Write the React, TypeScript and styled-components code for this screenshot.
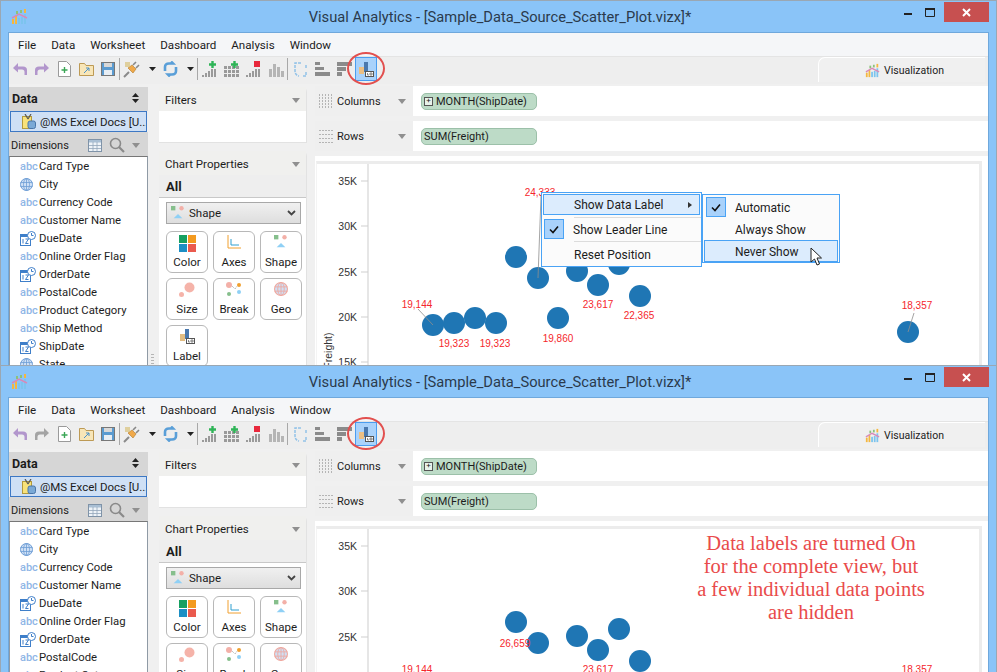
import React from "react";
import styled, { createGlobalStyle } from "styled-components";

const Global = createGlobalStyle`
  html, body { margin: 0; padding: 0; width: 997px; height: 672px; overflow: hidden; background: #8ac4f8; }
  * { box-sizing: border-box; }
  body { font-family: Roboto, "Open Sans", "Liberation Sans", sans-serif; font-size: 12px; color: #1c1c1c; }
  svg { flex: none; }
`;

const Frame = styled.section<{ $h: number }>`
  height: ${(p) => p.$h}px;
  width: 997px;
  background: #8ac4f8;
  border: 1px solid #9aa7b3;
  border-bottom: 0;
  display: flex;
  flex-direction: column;
  overflow: hidden;
`;
const TitleBar = styled.header`
  height: 31px;
  flex: none;
  display: grid;
  grid-template-columns: 1fr auto 1fr;
  align-items: center;
  padding: 0 7px 0 10px;
`;
const TitleText = styled.h1`
  margin: 0;
  font-size: 14.7px;
  font-weight: 400;
  color: #2a3a4c;
  white-space: nowrap;
`;
const Controls = styled.div`
  justify-self: end;
  align-self: start;
  display: flex;
  align-items: flex-start;
  height: 21px;
  margin-top: 1px;
`;
const Ctl = styled.div`
  width: 22px;
  height: 20px;
  display: flex;
  align-items: center;
  justify-content: center;
`;
const Close = styled.div`
  width: 45px;
  height: 20px;
  margin-left: 3px;
  background: #c75050;
  display: flex;
  align-items: center;
  justify-content: center;
`;
const Client = styled.div`
  margin: 0 7px;
  flex: 1;
  min-height: 0;
  border: 1px solid #6fa8dc;
  border-bottom: 0;
  background: #f0f0f0;
  display: flex;
  flex-direction: column;
  overflow: hidden;
`;
const MenuBar = styled.nav`
  height: 23px;
  flex: none;
  background: #f5f6f8;
  display: flex;
  align-items: center;
  gap: 15px;
  padding: 1px 0 0 9px;
  font-size: 11.6px;
`;
const ToolBar = styled.div`
  height: 28px;
  flex: none;
  display: flex;
  align-items: flex-start;
  background: #eeeeee;
  border-top: 1px solid #e4e4e4;
`;
const Slot = styled.div<{ $active?: boolean }>`
  position: relative;
  width: 22px;
  height: 24px;
  display: flex;
  align-items: center;
  justify-content: center;
  background: ${(p) => (p.$active ? "#a9d2fb" : "transparent")};
  outline: ${(p) => (p.$active ? "1px solid #4a9df0" : "none")};
  outline-offset: -1px;
`;
const Sep = styled.div`
  width: 1px;
  height: 22px;
  margin: 1px 1px 0 0;
  background: #a8a8a8;
`;
const Caret = styled.div`
  width: 10px;
  height: 24px;
  margin: 0 2px 0 4px;
  display: flex;
  align-items: center;
  justify-content: center;
`;
const RedRing = styled.div`
  position: absolute;
  left: -8px;
  top: -5px;
  width: 38px;
  height: 33px;
  border: 2px solid #e2504f;
  border-radius: 50%;
`;
const VizTab = styled.div`
  margin-left: auto;
  margin-right: 3px;
  width: 167px;
  height: 25px;
  background: #f0f0f0;
  border-top: 1px solid #fff;
  border-left: 1px solid #fff;
  border-top-left-radius: 7px;
  display: flex;
  align-items: center;
  padding: 1px 0 0 46px;
  gap: 4px;
  font-size: 10.5px;
`;
const Workspace = styled.div`
  flex: 1;
  min-height: 0;
  display: flex;
  padding-top: 2px;
  background: #f0f0f0;
`;
const DataPanel = styled.aside`
  width: 139px;
  flex: none;
  margin-top: 1px;
  display: flex;
  flex-direction: column;
`;
const DataHead = styled.div`
  height: 24px;
  flex: none;
  background: #d6d6d6;
  display: flex;
  align-items: center;
  justify-content: space-between;
  padding: 0 9px 2px 3px;
  font-weight: 700;
  font-size: 12.5px;
`;
const Source = styled.div`
  height: 21px;
  flex: none;
  margin: 0 1px;
  background: #cfe0f5;
  border: 1px solid #3d78c4;
  display: flex;
  align-items: center;
  gap: 4px;
  padding-left: 11px;
  white-space: nowrap;
  overflow: hidden;
  font-size: 11.5px;
`;
const DimHead = styled.div`
  height: 24px;
  flex: none;
  background: #d6d6d6;
  display: flex;
  align-items: center;
  padding: 2px 8px 0 2px;
  font-size: 11px;
`;
const DimIcons = styled.div`
  margin-left: auto;
  display: flex;
  align-items: center;
  gap: 7px;
`;
const FieldList = styled.ul`
  list-style: none;
  margin: 0;
  padding: 0;
  flex: 1;
  background: #fff;
  border: 1px solid #8f9aa5;
  border-bottom: 0;
  border-top-color: #777;
`;
const Field = styled.li`
  height: 18px;
  display: flex;
  align-items: center;
  font-size: 11.3px;
  white-space: nowrap;
`;
const FieldIcon = styled.span`
  width: 19px;
  margin-left: 10px;
  display: flex;
  justify-content: flex-start;
  flex: none;
  color: #8fb6e6;
  font-size: 11px;
  font-weight: 500;
`;
const FieldName = styled.span`
  margin-left: 0;
`;
const Gutter = styled.div<{ $w: number }>`
  width: ${(p) => p.$w}px;
  flex: none;
`;
const PropsColumn = styled.div`
  width: 148px;
  flex: none;
  display: flex;
  flex-direction: column;
  gap: 8px;
  padding-top: 1px;
`;
const Card = styled.div<{ $h?: number }>`
  background: #fff;
  border-top-left-radius: 5px;
  border-top-right-radius: 5px;
  border-right: 1px solid #e2e2e2;
  border-bottom: 1px solid #e2e2e2;
  flex: ${(p) => (p.$h ? "none" : "1")};
  height: ${(p) => (p.$h ? `${p.$h}px` : "auto")};
`;
const CardHead = styled.div`
  height: 24px;
  background: #f0f0ee;
  display: flex;
  align-items: center;
  justify-content: space-between;
  padding: 2px 6px 0;
  font-size: 11.5px;
`;
const AllRow = styled.div`
  height: 23px;
  background: #eeeeee;
  border-bottom: 1px solid #c8c8c8;
  display: flex;
  align-items: center;
  padding-left: 7px;
  font-weight: 700;
  font-size: 13px;
`;
const SelectBox = styled.div`
  margin: 4px 5px 0 7px;
  height: 22px;
  background: linear-gradient(#f0f0f0, #dedede);
  border: 1px solid #a8a8a8;
  display: flex;
  align-items: center;
  padding: 0 4px;
  gap: 4px;
  font-size: 11.5px;
`;
const SelectChevron = styled.span`
  margin-left: auto;
  display: flex;
`;
const PropGrid = styled.div`
  display: grid;
  grid-template-columns: repeat(3, 42px);
  gap: 5px;
  padding: 7px 0 0 7px;
`;
const PropButton = styled.div`
  height: 42px;
  background: #fff;
  border: 1px solid #b8b8b8;
  border-radius: 6px;
  display: flex;
  flex-direction: column;
  align-items: center;
  justify-content: space-between;
  padding: 3px 0 3px;
  font-size: 11.5px;
`;
const Main = styled.div`
  flex: 1;
  min-width: 0;
  display: flex;
  flex-direction: column;
  gap: 5px;
`;
const Shelf = styled.div`
  height: 30px;
  flex: none;
  display: flex;
  background: #fff;
  border-top-left-radius: 5px;
`;
const ShelfLabel = styled.div`
  width: 98px;
  flex: none;
  background: #efefef;
  display: flex;
  align-items: center;
  padding: 0 7px 0 4px;
  gap: 4px;
  font-size: 11px;
`;
const ShelfCaret = styled.span`
  margin-left: auto;
  display: flex;
`;
const ShelfBody = styled.div`
  flex: 1;
  display: flex;
  align-items: center;
  padding: 0 0 0 8px;
`;
const Chip = styled.div`
  width: 116px;
  height: 17px;
  background: #bddbc7;
  border: 1px solid #9cc0a9;
  border-radius: 5px;
  display: flex;
  align-items: center;
  padding-left: 2px;
  gap: 3px;
  font-size: 11px;
`;
const PlusBox = styled.span`
  width: 9px;
  height: 9px;
  border: 1px solid #555;
  background: #e8f2ea;
  display: flex;
  align-items: center;
  justify-content: center;
  font-size: 8px;
  line-height: 1;
`;
const ChartOuter = styled.div`
  flex: 1;
  background: #fff;
  padding: 5px 6px 0 1px;
`;
const ChartFrame = styled.div`
  position: relative;
  height: 400px;
  border-top: 3px solid #ececec;
  border-right: 3px solid #ececec;
  border-left: 1px solid #f4f4f4;
`;
const Menu = styled.div`
  position: absolute;
  left: 224px;
  top: 28px;
  width: 161px;
  height: 75px;
  background: #fbfbfb;
  border: 1px solid #4aa3f5;
  padding-top: 1px;
  font-size: 12px;
`;
const MenuRow = styled.div<{ $h: number; $hot?: boolean }>`
  height: ${(p) => p.$h}px;
  margin: 0 1px;
  display: flex;
  align-items: center;
  background: ${(p) => (p.$hot ? "#dcecfd" : "transparent")};
  border: 1px solid ${(p) => (p.$hot ? "#4aa3f5" : "transparent")};
`;
const Check = styled.span`
  width: 20px;
  height: 20px;
  background: #a9d2fb;
  border: 1px solid #4aa3f5;
  display: flex;
  align-items: center;
  justify-content: center;
  flex: none;
`;
const MenuText = styled.span<{ $pad: number; $dy?: number }>`
  margin-left: ${(p) => p.$pad}px;
  margin-top: ${(p) => p.$dy || 0}px;
  white-space: nowrap;
`;
const MenuArrow = styled.span`
  margin-left: auto;
  margin-right: 7px;
  width: 0;
  height: 0;
  border-left: 4px solid #333;
  border-top: 3.5px solid transparent;
  border-bottom: 3.5px solid transparent;
`;
const MenuSep = styled.div<{ $mt: number }>`
  height: 1px;
  margin: ${(p) => p.$mt}px 0 0 32px;
  background: #dcdcdc;
`;
const SubMenu = styled.div`
  position: absolute;
  left: 385px;
  top: 30px;
  width: 138px;
  height: 69px;
  background: #fbfbfb;
  border: 1px solid #4aa3f5;
  padding-top: 2px;
  font-size: 12px;
`;
const SubRow = styled.div<{ $h: number; $mt?: number; $hot?: boolean }>`
  height: ${(p) => p.$h}px;
  margin: ${(p) => p.$mt || 0}px 1px 0 1px;
  display: flex;
  align-items: center;
  padding-left: ${(p) => (p.$hot ? 0 : 1)}px;
  background: ${(p) => (p.$hot ? "#dcecfd" : "transparent")};
  border: 1px solid ${(p) => (p.$hot ? "#4aa3f5" : "transparent")};
`;
const Pointer = styled.svg`
  position: absolute;
  left: 493px;
  top: 83px;
`;
const Note = styled.div`
  position: absolute;
  left: 344px;
  top: 3px;
  width: 300px;
  text-align: center;
  font-family: "Liberation Serif", serif;
  font-size: 20.5px;
  line-height: 23px;
  color: #e94b4b;
`;
const Grip = styled.div`
  width: 3px;
  height: 12px;
  margin: 268px 0 0 3px;
  background: repeating-linear-gradient(#b5b5b5 0 1px, transparent 1px 3px);
`;
const ChartSvg = styled.svg`
  display: block;
`;

const Logo = ({ s = 17 }: { s?: number }) => (
  <svg width={s} height={s} viewBox="0 0 17 17">
    <rect x="1" y="11" width="2" height="5" fill="#f4b740" />
    <rect x="4" y="8" width="2" height="8" fill="#f4b740" />
    <rect x="7" y="10" width="2" height="6" fill="#7cc4ee" />
    <rect x="10" y="9" width="2" height="7" fill="#7cc4ee" />
    <rect x="13" y="6" width="2" height="10" fill="#7cc4ee" />
    <rect x="5" y="3" width="2" height="3" fill="#8cc27a" />
    <rect x="9" y="2" width="2" height="3" fill="#8cc27a" />
    <rect x="13" y="1" width="2" height="4" fill="#f4b740" />
    <path d="M1 10 L8 6 L16 10" stroke="#d889b8" strokeWidth="1.5" fill="none" />
  </svg>
);
const Undo = ({ c, flip }: { c: string; flip?: boolean }) => (
  <svg width="16" height="14" viewBox="0 0 16 14" style={flip ? { transform: "scaleX(-1)" } : undefined}>
    <path d="M6 1 L1 6 L6 10.5 V7.5 H10 Q12.5 7.5 12.5 10 V13 H15 V8 Q15 4.5 11 4.5 H6 Z" fill={c} />
  </svg>
);
const NewDoc = () => (
  <svg width="13" height="16" viewBox="0 0 13 16">
    <path d="M.5.5h8l4 4v11H.5z" fill="#fff" stroke="#9a9a9a" />
    <path d="M6.5 6v6M3.5 9h6" stroke="#3aa655" strokeWidth="1.4" />
  </svg>
);
const Folder = () => (
  <svg width="15" height="13" viewBox="0 0 15 13">
    <path d="M.5 12.5V.5h5l1.5 2h7.5v10z" fill="#f8e6b8" stroke="#bd9a55" />
    <path d="M5 10 L10 5 M7 5h3v3" stroke="#4b91c9" fill="none" />
  </svg>
);
const Save = () => (
  <svg width="14" height="14" viewBox="0 0 14 14">
    <rect x=".5" y=".5" width="13" height="13" fill="#5b9bd0" stroke="#777" />
    <rect x="3" y="1" width="8" height="4" fill="#d8d8d8" />
    <rect x="3" y="8" width="8" height="5" fill="#e8eef4" />
  </svg>
);
const Plug = () => (
  <svg width="18" height="18" viewBox="0 0 18 18">
    <path d="M1 17 L6 12" stroke="#8a8a8a" strokeWidth="2" />
    <path d="M5 8 L10 13 L13 9 L9 5 Z" fill="#f0a94a" stroke="#b07a2a" strokeWidth=".6" />
    <path d="M10 5 L13 2 M13 8 L16 5" stroke="#888" strokeWidth="1.6" />
    <rect x="2" y="2" width="5" height="5" fill="#d9c27a" opacity=".7" />
  </svg>
);
const Sync = ({ c = "#5a9fd8" }: { c?: string }) => (
  <svg width="15" height="16" viewBox="0 0 15 16">
    <path d="M2 10 V6 Q2 2.5 6 2.5 H10 L8 .5 M13 6 V10 Q13 13.5 9 13.5 H5 L7 15.5" fill="none" stroke={c} strokeWidth="2.6" />
  </svg>
);
const SmallCaret = () => (
  <svg width="7" height="4" viewBox="0 0 7 4"><path d="M0 0h7L3.5 4z" fill="#222" /></svg>
);
const GreyCaret = () => (
  <svg width="8" height="5" viewBox="0 0 8 5"><path d="M0 0h8L4 5z" fill="#8f8f8f" /></svg>
);
const BarsAdd = ({ mark }: { mark: "green" | "grid" | "red" | "none" }) => (
  <svg width="16" height="17" viewBox="0 0 16 17">
    {mark === "grid" ? (
      <g fill="#9a9a9a">
        {[2, 6, 10].map((y) => [0, 4, 8, 12].map((x) => <rect key={`${x}${y}`} x={x} y={y + 3} width="3" height="3" />))}
      </g>
    ) : mark === "none" ? (
      <g fill="#b5b5b5">
        <rect x="1" y="8" width="3" height="8" /><rect x="5" y="3" width="3" height="13" />
        <rect x="9" y="6" width="3" height="10" /><rect x="13" y="10" width="3" height="6" />
      </g>
    ) : (
      <g fill="#9a9a9a">
        <rect x="0" y="14" width="2" height="2" /><rect x="3" y="12" width="2" height="4" />
        <rect x="6" y="10" width="2" height="6" /><rect x="9" y="8" width="2" height="8" />
        <rect x="12" y="8" width="2" height="8" />
      </g>
    )}
    {(mark === "green" || mark === "grid") && (
      <path d="M10.5 0v7M7 3.5h7" stroke="#2fb457" strokeWidth="2.4" />
    )}
    {mark === "red" && <path d="M8 0h6v6H8z" fill="#e8283c" />}
  </svg>
);
const Loop = () => (
  <svg width="15" height="15" viewBox="0 0 15 15">
    <path d="M8 1 H2 V9 Q2 13 6 14 M10 14 H13 V10 M13 6 V3" fill="none" stroke="#92c2e8" strokeWidth="1.5" strokeDasharray="3 1" />
  </svg>
);
const SortA = () => (
  <svg width="15" height="14" viewBox="0 0 15 14">
    <rect x="0" y="0" width="5" height="3" fill="#8b8b8b" />
    <rect x="0" y="5" width="9" height="3" fill="#8b8b8b" />
    <rect x="0" y="10" width="15" height="4" fill="#8b8b8b" />
  </svg>
);
const SortB = () => (
  <svg width="15" height="14" viewBox="0 0 15 14">
    <rect x="0" y="0" width="15" height="4" fill="#8b8b8b" />
    <rect x="0" y="5" width="9" height="4" fill="#8b8b8b" />
    <rect x="0" y="10" width="5" height="4" fill="#8b8b8b" />
  </svg>
);
const LabelIcon = ({ hi }: { hi?: boolean }) => (
  <svg width="15" height="15" viewBox="0 0 15 15">
    <rect x="0" y="5" width="5" height="7" fill={hi ? "#ecbf83" : "#e2bd82"} />
    <rect x="5" y="0" width="4" height="10" fill="#4a78ad" />
    <rect x="6.5" y="9.5" width="8" height="5" fill="#fff" stroke="#555" />
    <path d="M8.5 11v2h1.5M11 11h2v2h-2z" fill="none" stroke="#555" strokeWidth=".7" />
  </svg>
);
const UpDown = () => (
  <svg width="7" height="10" viewBox="0 0 7 10"><path d="M3.5 0L7 4H0zM3.5 10L0 6h7z" fill="#222" /></svg>
);
const Db = () => (
  <svg width="14" height="15" viewBox="0 0 14 15">
    <rect x=".5" y="2.5" width="9" height="12" fill="#f8e27a" stroke="#b39a3d" />
    <path d="M3 0 L6 5 M9 0 L6 5" stroke="#555" strokeWidth="1.2" />
    <rect x="6" y="7" width="7.5" height="7.5" rx="2" fill="#7aa9d6" stroke="#4a76a8" />
  </svg>
);
const TableIco = () => (
  <svg width="14" height="13" viewBox="0 0 14 13">
    <rect x=".5" y=".5" width="13" height="12" fill="#eef3f8" stroke="#7f93a8" />
    <rect x="1" y="1" width="12" height="2.5" fill="#a9bfd4" />
    <path d="M5 3v9M9 3v9M1 6.500h12M1 9.500h12" stroke="#93a6ba" strokeWidth=".8" />
  </svg>
);
const Lens = () => (
  <svg width="16" height="16" viewBox="0 0 16 16">
    <circle cx="6.500" cy="6.500" r="5" fill="none" stroke="#8a8a8a" strokeWidth="1.6" />
    <path d="M10 10l5 5" stroke="#8a8a8a" strokeWidth="2.200" />
  </svg>
);
const Globe = ({ c = "#6f9ed6", s = 13 }: { c?: string; s?: number }) => (
  <svg width={s} height={s} viewBox="0 0 13 13">
    <circle cx="6.500" cy="6.500" r="6" fill="#cfe0f5" stroke={c} />
    <ellipse cx="6.500" cy="6.500" rx="3" ry="6" fill="none" stroke={c} strokeWidth=".8" />
    <path d="M.5 4.500h12M.5 8.500h12M6.500.5v12" stroke={c} strokeWidth=".8" />
  </svg>
);
const DateIco = () => (
  <svg width="16" height="15" viewBox="0 0 16 15">
    <rect x=".5" y="3.500" width="10" height="11" fill="#fff" stroke="#3f7fc9" />
    <rect x=".5" y="3.500" width="10" height="2.500" fill="#3f7fc9" />
    <path d="M3 8v4.500M5.500 8h3l-3 4.500h3" stroke="#3f7fc9" fill="none" />
    <circle cx="11.500" cy="4.500" r="4" fill="#fff" stroke="#3f7fc9" />
    <path d="M11.500 2v2.500h2" stroke="#3f7fc9" fill="none" />
  </svg>
);
const ShapeIco = ({ s = 16 }: { s?: number }) => (
  <svg width={s} height={s} viewBox="0 0 16 16">
    <rect x="0" y="0" width="5" height="5" fill="#86bf8c" />
    <circle cx="12" cy="2.500" r="2.500" fill="#f3b0a8" />
    <path d="M3 14 L8 9 L13 14 Z" fill="#8fd0f5" />
  </svg>
);
const ColorIco = () => (
  <svg width="17" height="17" viewBox="0 0 17 17">
    <rect width="8" height="8" fill="#16a060" /><rect x="9" width="8" height="8" fill="#f39a1f" />
    <rect y="9" width="8" height="8" fill="#1c8fc4" /><rect x="9" y="9" width="8" height="8" fill="#ea5a4e" />
  </svg>
);
const AxesIco = () => (
  <svg width="14" height="14" viewBox="0 0 14 14">
    <path d="M1 0v13h13" fill="none" stroke="#f0a030" />
    <path d="M4 4v6h8" fill="none" stroke="#2f9fd0" />
  </svg>
);
const SizeIco = () => (
  <svg width="16" height="16" viewBox="0 0 16 16">
    <circle cx="10.500" cy="5.500" r="5" fill="#f5b3a9" /><circle cx="2.500" cy="12.500" r="2.500" fill="#f5b3a9" />
  </svg>
);
const BreakIco = () => (
  <svg width="16" height="15" viewBox="0 0 16 15">
    <circle cx="3" cy="3" r="3" fill="#f3b0a8" /><circle cx="13" cy="3" r="2" fill="#f0a030" />
    <circle cx="3" cy="12" r="2" fill="#86bf8c" /><circle cx="13" cy="10" r="2" fill="#8fd0f5" />
    <path d="M6 4l3 3M9 7l2-3" stroke="#aaa" strokeDasharray="1 1" />
  </svg>
);
const Handle = () => (
  <svg width="14" height="15" viewBox="0 0 14 15">
    {[0, 3, 6, 9, 12].map((x) => (
      <path key={x} d={`M${x + 0.5} 0v15`} stroke="#b5b5b5" strokeDasharray="2 1" />
    ))}
  </svg>
);
const HandleRows = () => (
  <svg width="14" height="15" viewBox="0 0 14 15">
    {[1, 5, 9, 13].map((y) => (
      <path key={y} d={`M0 ${y + 0.5}h14`} stroke="#b5b5b5" strokeDasharray="2 1" />
    ))}
  </svg>
);
const Tick = () => (
  <svg width="10" height="9" viewBox="0 0 10 9"><path d="M1 4.500l3 3 5-6" fill="none" stroke="#111" strokeWidth="1.600" /></svg>
);

const fields: [string, string][] = [
  ["abc", "Card Type"], ["geo", "City"], ["abc", "Currency Code"], ["abc", "Customer Name"],
  ["date", "DueDate"], ["abc", "Online Order Flag"], ["date", "OrderDate"], ["abc", "PostalCode"],
  ["abc", "Product Category"], ["abc", "Ship Method"], ["date", "ShipDate"], ["geo", "State"],
];
const points = [
  [433, 325], [454, 323], [475, 318], [496, 323], [516, 257], [538, 278],
  [577, 271], [598, 285], [619, 264], [558, 318], [640, 296], [908, 332],
];
const ticks: [string, number][] = [["35K", 181], ["30K", 226], ["25K", 272], ["20K", 317], ["15K", 362]];
const labelsTop: [string, number, number][] = [
  ["24,333", 540, 196], ["19,144", 417, 308], ["19,323", 454, 347], ["19,323", 495, 347],
  ["19,860", 558, 342], ["23,617", 598, 308], ["22,365", 639, 319], ["18,357", 917, 309],
];
const labelsBottom: [string, number, number][] = [
  ["26,659", 515, 282], ["19,144", 417, 308], ["23,617", 598, 308], ["18,357", 917, 308],
];

const Chart = ({ top }: { top: boolean }) => (
  <ChartSvg width="655" height="397" viewBox="317 164 655 397">
    <path d="M368 164V400" stroke="#e6e6e6" strokeWidth="2" />
    {ticks.map(([t, y]) => (
      <g key={t}>
        <path d={`M361 ${y}h7`} stroke="#cfcfcf" />
        <text x="357" y={y + 4} textAnchor="end" fontFamily="Liberation Sans" fontSize="10.500" fill="#333">{t}</text>
      </g>
    ))}
    <text transform="rotate(-90 332 364)" x="332" y="364" textAnchor="middle" fontFamily="Liberation Sans" fontSize="10.500" fill="#333">SUM(Freight)</text>
    {points.map(([x, y]) => <circle key={`${x}`} cx={x} cy={y} r="11" fill="#1f76b4" />)}
    {top && (
      <g stroke="#8f8f8f" strokeWidth="1" opacity=".8">
        <path d="M538 278L541 196" />
        <path d="M418 309L433 325" />
        <path d="M908 332L914 313" />
      </g>
    )}
    {(top ? labelsTop : labelsBottom).map(([t, x, y]) => (
      <text key={`${t}${x}`} x={x} y={y} textAnchor="middle" fontFamily="Liberation Sans" fontSize="10" fill="#f5262c">{t}</text>
    ))}
  </ChartSvg>
);

const ContextMenu = () => (
  <>
    <Menu>
      <MenuRow $h={21} $hot><MenuText $pad={30}>Show Data Label</MenuText><MenuArrow /></MenuRow>
      <MenuSep $mt={2} />
      <MenuRow $h={22}><Check><Tick /></Check><MenuText $pad={9} $dy={2}>Show Leader Line</MenuText></MenuRow>
      <MenuSep $mt={1} />
      <MenuRow $h={24}><MenuText $pad={30} $dy={2}>Reset Position</MenuText></MenuRow>
    </Menu>
    <SubMenu>
      <SubRow $h={20}><Check><Tick /></Check><MenuText $pad={9} $dy={2}>Automatic</MenuText></SubRow>
      <SubRow $h={21} $mt={2}><MenuText $pad={29}>Always Show</MenuText></SubRow>
      <SubRow $h={22} $hot><MenuText $pad={30} $dy={2}>Never Show</MenuText></SubRow>
    </SubMenu>
    <Pointer width="13" height="20" viewBox="0 0 13 20">
      <path d="M1 1V15L4.500 12L7 18L9.500 17L7 11H11.500Z" fill="#fff" stroke="#222" strokeWidth="1" />
    </Pointer>
  </>
);

const AppWindow = ({ h, top }: { h: number; top: boolean }) => (
  <Frame $h={h}>
    <TitleBar>
      <Logo />
      <TitleText>Visual Analytics - [Sample_Data_Source_Scatter_Plot.vizx]*</TitleText>
      <Controls>
        <Ctl><svg width="9" height="9" viewBox="0 0 9 9"><rect y="5" width="8" height="2" fill="#222" /></svg></Ctl>
        <Ctl><svg width="11" height="9" viewBox="0 0 11 9"><path d="M.5 1.500h9v7h-9z" fill="none" stroke="#222" /><rect width="10" height="2" fill="#222" /></svg></Ctl>
        <Close><svg width="9" height="9" viewBox="0 0 9 9"><path d="M1 1l7 7M8 1l-7 7" stroke="#fff" strokeWidth="2" /></svg></Close>
      </Controls>
    </TitleBar>
    <Client>
      <MenuBar>
        {["File", "Data", "Worksheet", "Dashboard", "Analysis", "Window"].map((m) => <span key={m}>{m}</span>)}
      </MenuBar>
      <ToolBar>
        <Slot><Undo c="#b296cc" /></Slot>
        <Slot><Undo c={top ? "#b296cc" : "#a4a4a4"} flip /></Slot>
        <Slot><NewDoc /></Slot>
        <Slot><Folder /></Slot>
        <Slot><Save /></Slot>
        <Sep />
        <Slot><Plug /></Slot>
        <Caret><SmallCaret /></Caret>
        <Slot><Sync /></Slot>
        <Caret><SmallCaret /></Caret>
        <Sep />
        <Slot><BarsAdd mark="green" /></Slot>
        <Slot><BarsAdd mark="grid" /></Slot>
        <Slot><BarsAdd mark="red" /></Slot>
        <Slot><BarsAdd mark="none" /></Slot>
        <Sep />
        <Slot><Loop /></Slot>
        <Slot><SortA /></Slot>
        <Slot><SortB /></Slot>
        <Slot $active><LabelIcon hi /><RedRing /></Slot>
        <VizTab><Logo s={15} /><span>Visualization</span></VizTab>
      </ToolBar>
      <Workspace>
        <DataPanel>
          <DataHead><span>Data</span><UpDown /></DataHead>
          <Source><Db /><span>@MS Excel Docs [U...</span></Source>
          <DimHead>
            <span>Dimensions</span>
            <DimIcons><TableIco /><Lens /><GreyCaret /></DimIcons>
          </DimHead>
          <FieldList>
            {fields.map(([k, n]) => (
              <Field key={n}>
                <FieldIcon>{k === "abc" ? "abc" : k === "geo" ? <Globe /> : <DateIco />}</FieldIcon>
                <FieldName>{n}</FieldName>
              </Field>
            ))}
          </FieldList>
        </DataPanel>
        <Gutter $w={11}><Grip /></Gutter>
        <PropsColumn>
          <Card $h={56}>
            <CardHead><span>Filters</span><GreyCaret /></CardHead>
          </Card>
          <Card>
            <CardHead><span>Chart Properties</span><GreyCaret /></CardHead>
            <AllRow>All</AllRow>
            <SelectBox>
              <ShapeIco s={14} />
              <span>Shape</span>
              <SelectChevron>
                <svg width="9" height="6" viewBox="0 0 9 6"><path d="M1 1l3.500 3.500L8 1" fill="none" stroke="#444" strokeWidth="1.800" /></svg>
              </SelectChevron>
            </SelectBox>
            <PropGrid>
              <PropButton><ColorIco /><span>Color</span></PropButton>
              <PropButton><AxesIco /><span>Axes</span></PropButton>
              <PropButton><ShapeIco s={14} /><span>Shape</span></PropButton>
              <PropButton><SizeIco /><span>Size</span></PropButton>
              <PropButton><BreakIco /><span>Break</span></PropButton>
              <PropButton><Globe c="#f0a89e" s={14} /><span>Geo</span></PropButton>
              <PropButton><LabelIcon /><span>Label</span></PropButton>
            </PropGrid>
          </Card>
        </PropsColumn>
        <Gutter $w={8} />
        <Main>
          <Shelf>
            <ShelfLabel><Handle /><span>Columns</span><ShelfCaret><GreyCaret /></ShelfCaret></ShelfLabel>
            <ShelfBody><Chip><PlusBox>+</PlusBox><span>MONTH(ShipDate)</span></Chip></ShelfBody>
          </Shelf>
          <Shelf>
            <ShelfLabel><HandleRows /><span>Rows</span><ShelfCaret><GreyCaret /></ShelfCaret></ShelfLabel>
            <ShelfBody><Chip><span>SUM(Freight)</span></Chip></ShelfBody>
          </Shelf>
          <ChartOuter>
            <ChartFrame>
              <Chart top={top} />
              {top ? <ContextMenu /> : (
                <Note>
                  Data labels are turned On<br />
                  for the complete view, but<br />
                  a few individual data points<br />
                  are hidden
                </Note>
              )}
            </ChartFrame>
          </ChartOuter>
        </Main>
      </Workspace>
    </Client>
  </Frame>
);

export default function App() {
  return (
    <>
      <Global />
      <AppWindow h={365} top />
      <AppWindow h={307} top={false} />
    </>
  );
}
